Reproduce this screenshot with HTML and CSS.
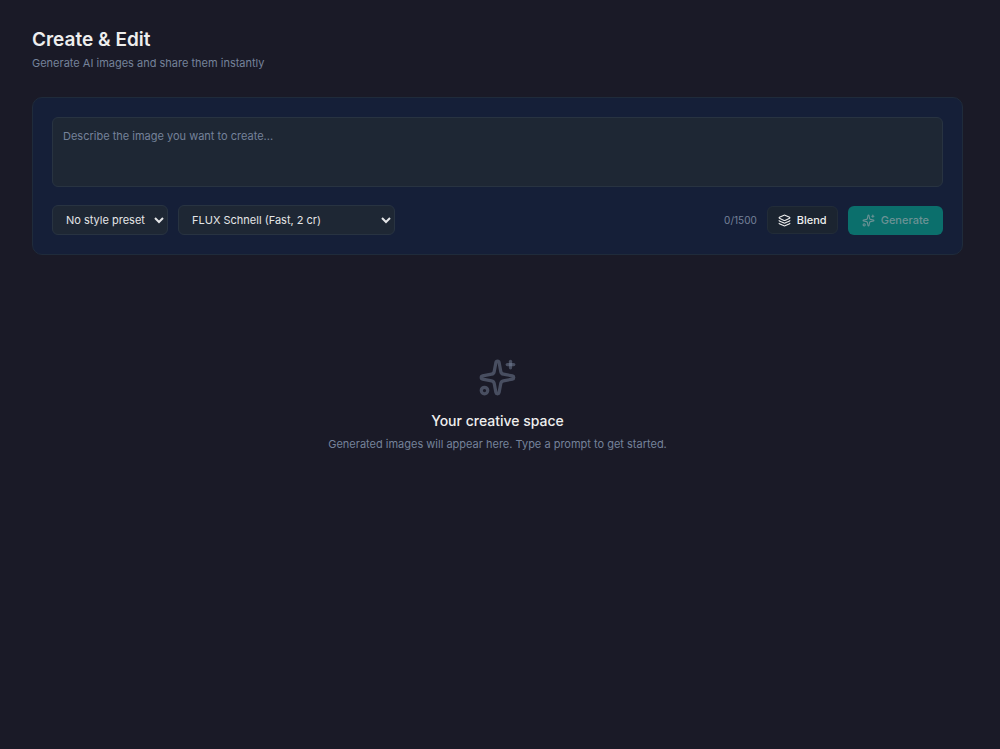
FILE: index.html
```html
<!DOCTYPE html>
<html lang="en">
<head>
  <meta charset="UTF-8">
  <meta name="viewport" content="width=device-width, initial-scale=1.0">
  <title>Create &amp; Edit</title>
  <link rel="stylesheet" href="styles.css">
</head>
<body>
  <main class="page">
    <header class="page-header">
      <h1>Create &amp; Edit</h1>
      <p>Generate AI images and share them instantly</p>
    </header>

    <form class="prompt-card">
      <textarea class="prompt" aria-label="Prompt" maxlength="1500" placeholder="Describe the image you want to create..."></textarea>

      <div class="toolbar">
        <select class="select" aria-label="Style preset">
          <option>No style preset</option>
        </select>
        <select class="select select-model" aria-label="Model">
          <option>FLUX Schnell (Fast, 2 cr)</option>
        </select>

        <div class="actions">
          <span class="counter">0/1500</span>
          <button type="button" class="btn btn-blend">
            <svg class="icon" viewBox="0 0 24 24" aria-hidden="true">
              <path d="M12.83 2.18a2 2 0 0 0-1.66 0L2.6 6.08a1 1 0 0 0 0 1.83l8.58 3.91a2 2 0 0 0 1.66 0l8.58-3.9a1 1 0 0 0 0-1.83z"/>
              <path d="M2 12a1 1 0 0 0 .58.91l8.6 3.91a2 2 0 0 0 1.65 0l8.58-3.9A1 1 0 0 0 22 12"/>
              <path d="M2 17a1 1 0 0 0 .58.91l8.6 3.91a2 2 0 0 0 1.65 0l8.58-3.9A1 1 0 0 0 22 17"/>
            </svg>
            Blend
          </button>
          <button type="submit" class="btn btn-generate" disabled>
            <svg class="icon" viewBox="0 0 24 24" aria-hidden="true">
              <path d="M11.017 2.814a1 1 0 0 1 1.966 0l1.051 5.558a2 2 0 0 0 1.594 1.594l5.558 1.051a1 1 0 0 1 0 1.966l-5.558 1.051a2 2 0 0 0-1.594 1.594l-1.051 5.558a1 1 0 0 1-1.966 0l-1.051-5.558a2 2 0 0 0-1.594-1.594l-5.558-1.051a1 1 0 0 1 0-1.966l5.558-1.051a2 2 0 0 0 1.594-1.594z"/>
              <path d="M20 2v4"/>
              <path d="M22 4h-4"/>
              <circle cx="4" cy="20" r="2"/>
            </svg>
            Generate
          </button>
        </div>
      </div>
    </form>

    <section class="empty">
      <svg class="icon empty-icon" viewBox="0 0 24 24" aria-hidden="true">
        <path d="M11.017 2.814a1 1 0 0 1 1.966 0l1.051 5.558a2 2 0 0 0 1.594 1.594l5.558 1.051a1 1 0 0 1 0 1.966l-5.558 1.051a2 2 0 0 0-1.594 1.594l-1.051 5.558a1 1 0 0 1-1.966 0l-1.051-5.558a2 2 0 0 0-1.594-1.594l-5.558-1.051a1 1 0 0 1 0-1.966l5.558-1.051a2 2 0 0 0 1.594-1.594z"/>
        <path d="M20 2v4"/>
        <path d="M22 4h-4"/>
        <circle cx="4" cy="20" r="2"/>
      </svg>
      <h2>Your creative space</h2>
      <p>Generated images will appear here. Type a prompt to get started.</p>
    </section>
  </main>
</body>
</html>
```
FILE: styles.css
```css
* {
  box-sizing: border-box;
}

body {
  margin: 0;
  background: #1a1a27;
  color: #eeeeee;
  font-family: Inter, sans-serif;
  font-size: 11px;
  line-height: 18px;
}

h1, h2, p {
  margin: 0;
}

.page {
  padding: 27px 37px 26px 32px;
}

/* Header */
.page-header {
  margin-bottom: 25px;
}

h1 {
  font-size: 19px;
  font-weight: 600;
  line-height: 26px;
  margin-bottom: 1px;
}

.page-header p,
.empty p {
  color: #75829a;
}

/* Prompt card */
.prompt-card {
  padding: 19px;
  background: #151f38;
  border: 1px solid #1f2b3b;
  border-radius: 10px;
}

.prompt {
  display: block;
  width: 100%;
  height: 70px;
  padding: 9px 10px;
  background: #1e2734;
  border: 1px solid #283341;
  border-radius: 6px;
  color: #eeeeee;
  font: inherit;
  resize: none;
}

.prompt::placeholder {
  color: #75829a;
}

.toolbar {
  display: flex;
  align-items: center;
  gap: 10px;
  margin-top: 18px;
}

.select {
  width: 116px;
  height: 30px;
  padding: 0 0 0 9px;
  background: #1e2734;
  border: 1px solid #283341;
  border-radius: 6px;
  color: #e4e5e7;
  font: inherit;
}

.select-model {
  width: 217px;
}

.actions {
  display: flex;
  align-items: center;
  gap: 10px;
  margin-left: auto;
}

.counter {
  color: #75829a;
  font-size: 10px;
}

.btn {
  display: flex;
  align-items: center;
  gap: 6px;
  height: 28px;
  padding: 0 10px;
  border: 1px solid #222c38;
  border-radius: 6px;
  font: inherit;
  font-weight: 500;
}

.btn-blend {
  background: #1b2430;
  color: #eeeeee;
}

.btn-generate {
  height: 29px;
  padding: 0 14px;
  background: #0b6f6c;
  border: none;
  color: #6b9295;
}

/* Icons */
.icon {
  width: 13px;
  height: 13px;
  fill: none;
  stroke: currentColor;
  stroke-width: 2;
  stroke-linecap: round;
  stroke-linejoin: round;
}

/* Empty state */
.empty {
  display: flex;
  flex-direction: column;
  align-items: center;
  padding: 103px 0;
  text-align: center;
}

.empty-icon {
  width: 39px;
  height: 39px;
  margin-bottom: 14px;
  color: rgba(117, 130, 154, 0.5);
}

h2 {
  font-size: 14px;
  font-weight: 500;
  line-height: 20px;
  margin-bottom: 4px;
}
```
